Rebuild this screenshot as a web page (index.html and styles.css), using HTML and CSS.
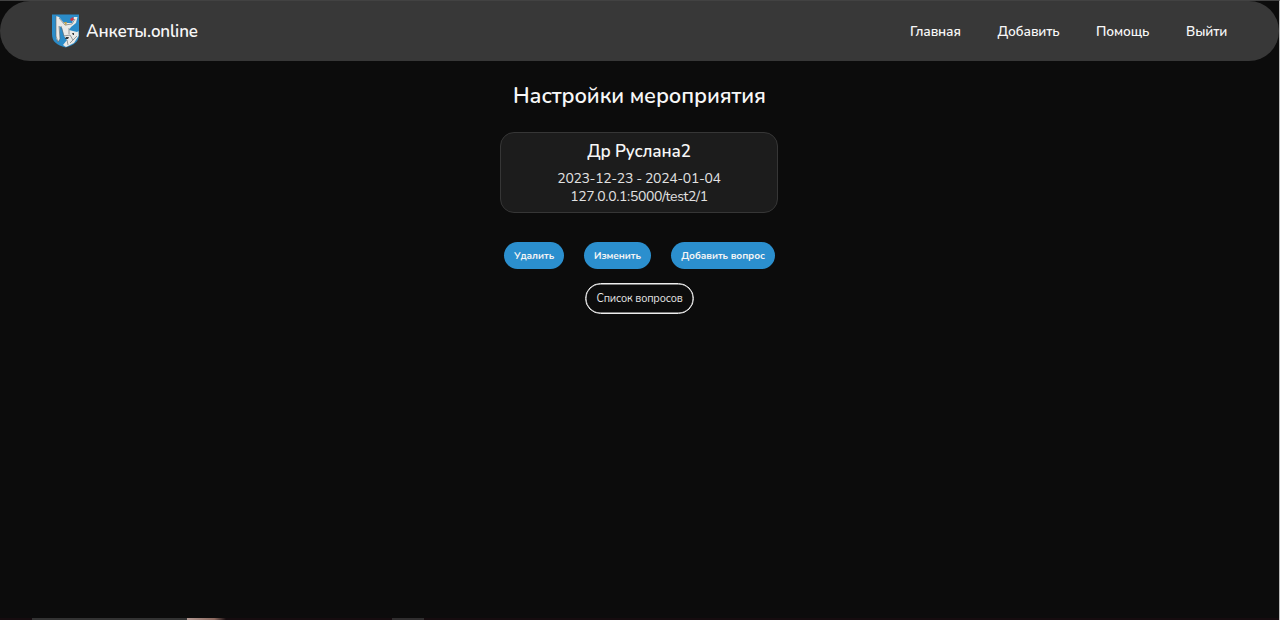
FILE: index.html
```html
<!DOCTYPE html>
<html lang="ru">
<head>
<meta charset="utf-8">
<title>Анкеты.online</title>
<link rel="stylesheet" href="styles.css">
</head>
<body>
<div class="page">
  <header class="header">
    <a class="brand">
      <svg class="crest" viewBox="0 0 27 34">
        <path d="M0 .5H27V20C27 28 22 31 13.500 33.500C5 31 0 28 0 20Z" fill="#2b8cc9"/>
        <path d="M4 2L7 3L12 9L20 9L22 3L25.500 3L24 9L19 13L17 16L25 18L26.500 17V22L22 29L14 33L11 31L15 26L12 22L10 14L7.500 12L8 25L6 28L4 24Z" fill="#e9e9e7"/>
        <path d="M4 2V22L6 28L8 25L7 12M7 4L13 11L20 10L23 5M9 12L12 22M17 14V20M12 22L18 21L21 26M18 29L25 22M15 26L16 31" fill="none" stroke="#5b6165" stroke-width=".6"/>
        <path d="M14 23L17 23L16 25L13 25ZM20 19L22 19L22 21L21 21Z" fill="#34373b"/>
        <path d="M18 5L21 3L22 6L19 7Z" fill="#cf3542"/>
        <path d="M12 8L15 8L14 12Z" fill="#c5a550"/>
      </svg>
      <span class="brand-name">Анкеты.online</span>
    </a>
    <nav class="nav">
      <a class="nav-main">Главная</a>
      <a class="nav-add">Добавить</a>
      <a class="nav-help">Помощь</a>
      <a class="nav-exit">Выйти</a>
    </nav>
  </header>
  <main class="content">
    <h1 class="title">Настройки мероприятия</h1>
    <section class="card">
      <h2 class="card-name">Др Руслана2</h2>
      <div class="card-dates">2023-12-23 - 2024-01-04</div>
      <div class="card-link">127.0.0.1:5000/test2/1</div>
    </section>
    <div class="actions">
      <button class="btn btn-delete">Удалить</button>
      <button class="btn btn-edit">Изменить</button>
      <button class="btn btn-question">Добавить вопрос</button>
    </div>
    <button class="btn-outline">Список вопросов</button>
  </main>
  <footer class="edge"><i class="edge-bar"></i><i class="edge-glow"></i><i class="edge-tab"></i></footer>
</div>
</body>
</html>
```
FILE: styles.css
```css
* { box-sizing: border-box; }
body { margin: 0; background: #0c0c0c; color: #f7f7f7; font-family: Nunito, Lato, "Noto Sans", sans-serif; }
.page { width: 1280px; height: 620px; display: flex; flex-direction: column; overflow: hidden; border-top: 1px solid #424242; border-right: 1px solid #bdbdbd; }
.header { height: 60px; flex: none; display: flex; align-items: center; justify-content: space-between; padding: 0 51px 0 52px; background: #383838; border-radius: 30px; }
.brand { display: flex; align-items: center; gap: 7px; }
.crest { width: 27px; height: 34px; }
.brand-name { font-size: 17px; font-weight: 650; letter-spacing: -.12px; white-space: nowrap; }
.nav { display: flex; gap: 36px; font-size: 13.600px; font-weight: 650; letter-spacing: -.12px; white-space: nowrap; }
.nav-main { width: 51.500px; }
.nav-add { width: 62.500px; }
.nav-help { width: 54px; }
.nav-exit { width: 42px; }
.content { flex: 1; display: flex; flex-direction: column; align-items: center; }
.title { margin: 21px 0 21px; height: 29px; line-height: 29px; font-size: 21.700px; font-weight: 600; letter-spacing: -.1px; white-space: nowrap; }
.card { width: 278px; height: 81px; margin-right: 1px; padding-top: 8px; background: #1c1c1c; border: 1px solid #363636; border-radius: 14px; text-align: center; white-space: nowrap; }
.card-name { margin: 0 0 7px; line-height: 22px; font-size: 17px; font-weight: 650; letter-spacing: -.15px; }
.card-dates, .card-link { line-height: 18px; font-size: 14px; letter-spacing: -.35px; color: #e2e2e2; }
.actions { display: flex; gap: 20px; margin: 29px 0 14px; }
.btn { height: 27px; padding: 0; border: 0; border-radius: 14px; background: #2b8fce; color: #f5f5f5; font: 700 10px Nunito, Lato, "Noto Sans", sans-serif; letter-spacing: -.06px; white-space: nowrap; }
.btn-delete { width: 60px; }
.btn-edit { width: 67px; }
.btn-question { width: 104px; }
.btn-outline { width: 109px; height: 31px; padding: 0; border: 1px solid #eee; box-shadow: inset 0 0 0 .5px #eee; border-radius: 16px; background: #0c0c0c; color: #e8e8e8; font: 400 10.900px Nunito, Lato, "Noto Sans", sans-serif; letter-spacing: -.15px; white-space: nowrap; }
.edge { height: 2px; display: flex; flex: none; background: #160c0f; padding-left: 32px; }
.edge-bar { width: 155px; background: #333; }
.edge-glow { width: 39px; background: linear-gradient(90deg, #b49a94, #8d6a60 70%, #160c0f); }
.edge-tab { width: 32px; margin-left: 166px; background: #302e2f; }
```
